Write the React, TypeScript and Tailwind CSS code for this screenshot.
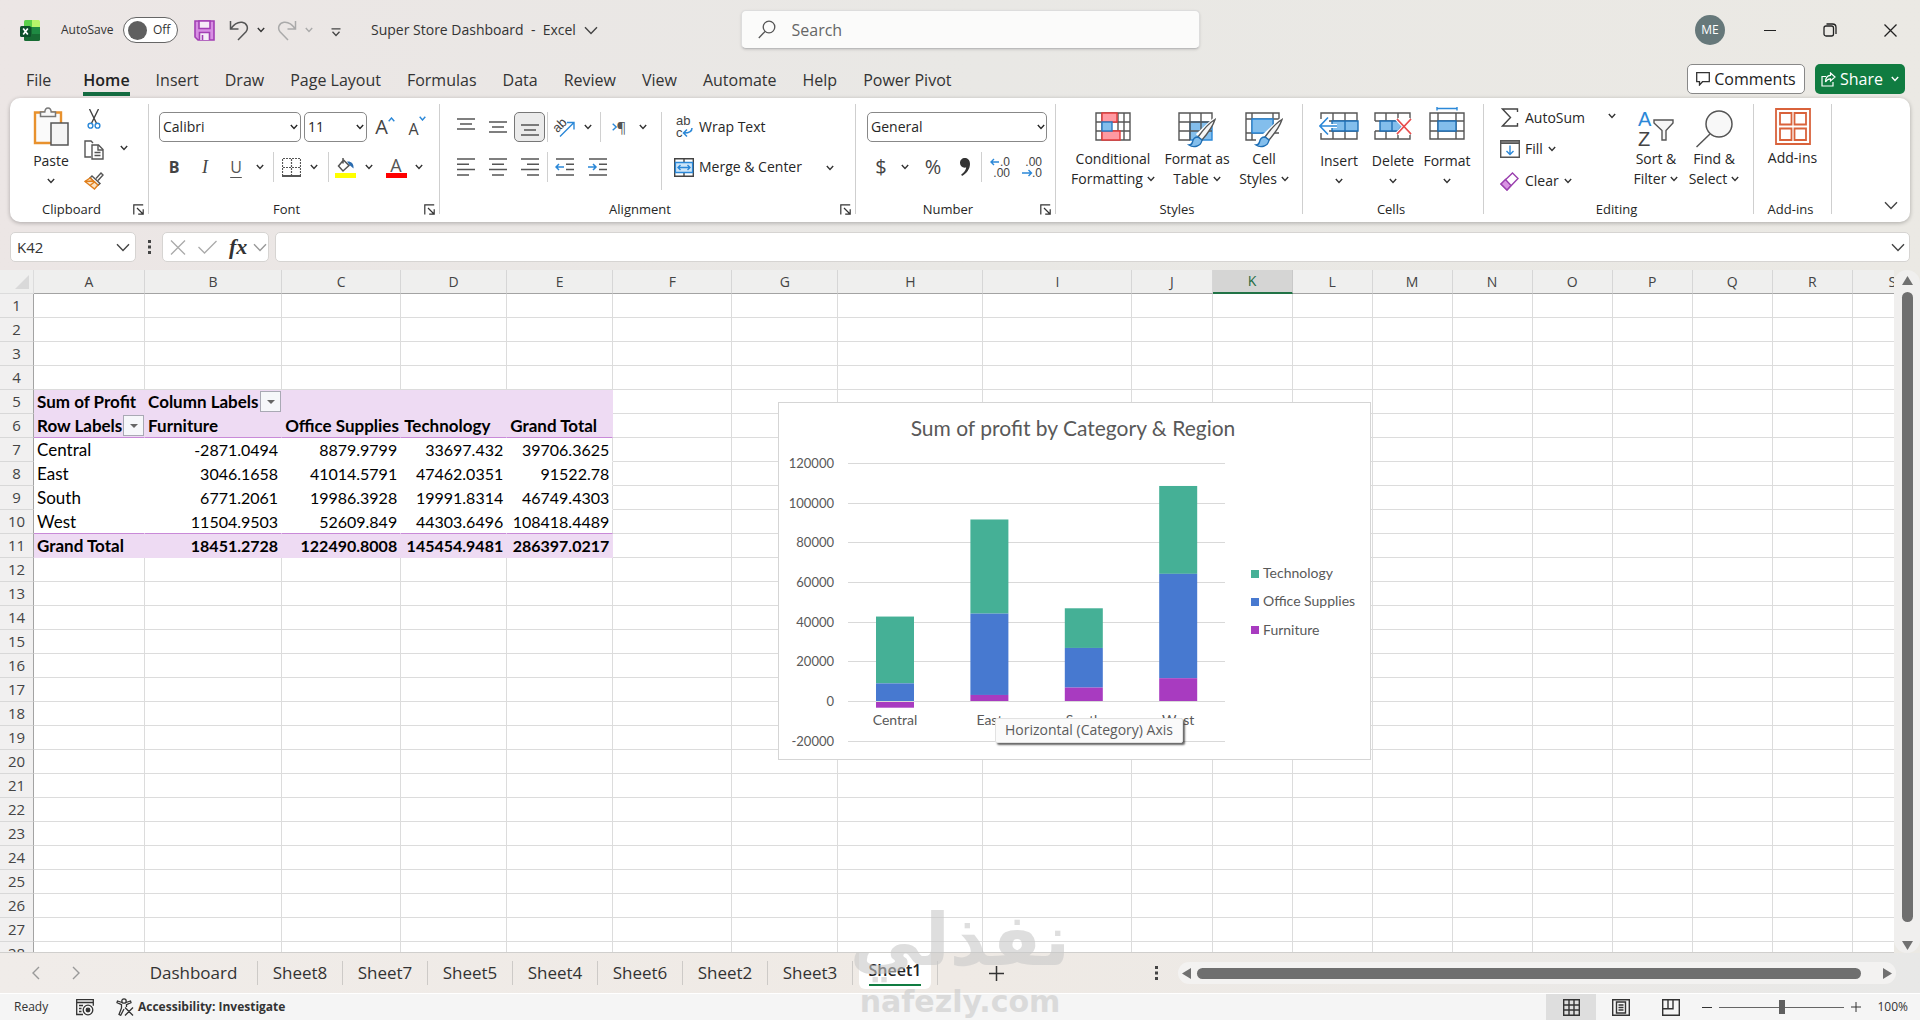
import React from "react";

type IconProps = { className?: string };

const COLUMNS = [
  { id: "A", width: 111 },
  { id: "B", width: 137 },
  { id: "C", width: 119 },
  { id: "D", width: 106 },
  { id: "E", width: 106 },
  { id: "F", width: 119 },
  { id: "G", width: 106 },
  { id: "H", width: 145 },
  { id: "I", width: 149 },
  { id: "J", width: 80 },
  { id: "K", width: 80 },
  { id: "L", width: 80 },
  { id: "M", width: 80 },
  { id: "N", width: 80 },
  { id: "O", width: 80 },
  { id: "P", width: 80 },
  { id: "Q", width: 80 },
  { id: "R", width: 80 },
  { id: "S", width: 80 },
];

const ROWS = Array.from({ length: 28 }, (_, i) => i + 1);

// Pivot table contents, keyed by row number
const PIVOT: Record<number, string[]> = {
  5: ["Sum of Profit", "Column Labels", "", "", ""],
  6: ["Row Labels", "Furniture", "Office Supplies", "Technology", "Grand Total"],
  7: ["Central", "-2871.0494", "8879.9799", "33697.432", "39706.3625"],
  8: ["East", "3046.1658", "41014.5791", "47462.0351", "91522.78"],
  9: ["South", "6771.2061", "19986.3928", "19991.8314", "46749.4303"],
  10: ["West", "11504.9503", "52609.849", "44303.6496", "108418.4489"],
  11: ["Grand Total", "18451.2728", "122490.8008", "145454.9481", "286397.0217"],
};

const REGIONS = [
  { name: "Central", furniture: -2871, office: 8880, tech: 33697 },
  { name: "East", furniture: 3046, office: 41015, tech: 47462 },
  { name: "South", furniture: 6771, office: 19986, tech: 19992 },
  { name: "West", furniture: 11505, office: 52610, tech: 44304 },
];

const TABS = ["File", "Home", "Insert", "Draw", "Page Layout", "Formulas", "Data", "Review", "View", "Automate", "Help", "Power Pivot"];
const SHEETS = ["Sheet8", "Sheet7", "Sheet5", "Sheet4", "Sheet6", "Sheet2", "Sheet3"];

/* ---------- small shared pieces ---------- */

const Chevron: React.FC<IconProps> = ({ className = "text-[#333]" }) => (
  <svg width="8" height="6" viewBox="0 0 8 6" fill="none" stroke="currentColor" strokeWidth="1.4" className={"shrink-0 " + className}>
    <path d="M.8 1 4 4.4 7.2 1" />
  </svg>
);

const BigChevron: React.FC<IconProps> = ({ className = "text-[#444]" }) => (
  <svg width="14" height="9" viewBox="0 0 14 9" fill="none" stroke="currentColor" strokeWidth="1.4" className={"shrink-0 " + className}>
    <path d="M1 1.2 7 7.4 13 1.2" />
  </svg>
);

const Launcher: React.FC<{ label: string }> = ({ label }) => (
  <button aria-label={label}>
    <svg width="11" height="11" viewBox="0 0 11 11" fill="none" stroke="#333" strokeWidth="1.2">
      <path d="M.8 10.5V.8h9.4M4 4l6 6M10.2 5.2v5H5.2" />
    </svg>
  </button>
);

const ChevronButton: React.FC<{ label: string; className?: string }> = ({ label, className = "" }) => (
  <button aria-label={label} className={"flex h-6 items-center justify-center " + className}>
    <Chevron />
  </button>
);

const IconButton: React.FC<{ label: string; className?: string; children: React.ReactNode }> = ({ label, className = "w-8", children }) => (
  <button aria-label={label} className={"flex h-[30px] shrink-0 items-center justify-center " + className}>
    {children}
  </button>
);

const Divider: React.FC<IconProps> = ({ className = "" }) => <span className={"h-[30px] w-px shrink-0 bg-[#d0d0d0] " + className} />;

const Group: React.FC<{ name: string; className: string; launcher?: boolean; children: React.ReactNode }> = ({ name, className, launcher, children }) => (
  <section aria-label={name} className={"mt-[6px] flex h-[110px] shrink-0 flex-col border-r border-[#cfcfcf] " + className}>
    <div className="flex flex-1 items-start">{children}</div>
    <div className="flex h-[10px] items-center pr-1">
      <span className="flex-1 text-center text-[13px] leading-4">{name}</span>
      {launcher && <Launcher label={name + " settings"} />}
    </div>
  </section>
);

/* ---------- icons ---------- */

const ExcelLogo = () => (
  <svg width="20" height="21" viewBox="0 0 20 21">
    <path d="M4 1.5Q4 0 5.500 0H12v7H4z" fill="#5bd04a" />
    <path d="M12 0h6.500Q20 0 20 1.500V7h-8z" fill="#b6f56a" />
    <path d="M4 7h16v12.500q0 1.500-1.500 1.500h-13Q4 21 4 19.500z" fill="#176b33" />
    <path d="M12 7h8v7h-8z" fill="#1e8a42" />
    <rect y="6" width="11" height="11" rx="1.500" fill="#0d4f2a" />
    <path d="m3.200 8.500 4.600 6M7.800 8.500l-4.600 6" stroke="#fff" strokeWidth="1.700" />
  </svg>
);

const SaveIcon = () => (
  <svg width="21" height="21" viewBox="0 0 21 21" fill="none" stroke="#a23fb4" strokeWidth="1.600">
    <path d="M1 1h19v19H4l-3-3z" fill="#d78fe3" />
    <path d="M5 1h11v7.500H5z" fill="#f6ecf8" />
    <path d="M5.500 20v-7.500h10V20" fill="#f6ecf8" />
    <path d="M8.500 15v5" />
  </svg>
);

const UndoIcon: React.FC<IconProps> = ({ className = "" }) => (
  <svg width="20" height="21" viewBox="0 0 20 21" fill="none" stroke="currentColor" strokeWidth="1.500" className={className}>
    <path d="M1.500 1v8h8M2 8.500C5 4 9 1.800 13 2.200c5 .6 6.800 6 4 9.600L9 20" />
  </svg>
);

const PasteIcon = () => (
  <svg width="36" height="39" viewBox="0 0 36 39" fill="none" strokeWidth="1.500">
    <path d="M2 5.500h26V36H2z" fill="#fafafa" stroke="#e8912d" strokeWidth="2.400" />
    <path d="M7.500 9.500V5h4.300C12 2.500 13 1 15 1s3 1.500 3.200 4h4.300v4.500z" fill="#f8f8f8" stroke="#777" />
    <path d="M18 16h17v22H18z" fill="#f5f5f5" stroke="#555" />
  </svg>
);

const CutIcon = () => (
  <svg width="14" height="20" viewBox="0 0 14 20" fill="none" strokeWidth="1.400">
    <path d="M2.500 0 9.600 14.500M11.500 0 4.400 14.500" stroke="#444" />
    <circle cx="3.500" cy="16.700" r="2.400" stroke="#2b88d8" />
    <circle cx="10.500" cy="16.700" r="2.400" stroke="#2b88d8" />
  </svg>
);

const CopyIcon = () => (
  <svg width="20" height="20" viewBox="0 0 20 20" fill="none" stroke="#555" strokeWidth="1.400">
    <path d="M7 17H1V1h6l2 2" />
    <path d="M8 5h6.500L19 9.500V19H8z" fill="#fff" />
    <path d="M14 5v5h5M10.500 12.500h6M10.500 15.500h6" />
  </svg>
);

const BrushIcon = () => (
  <svg width="20" height="18" viewBox="0 0 20 18" fill="none" strokeWidth="1.400">
    <path d="m12 6.500 5-5.500 2 2-5 5.500" fill="#fff" stroke="#555" />
    <path d="m8 4 8 7.500-2 1.800L6 6z" fill="#fff" stroke="#555" />
    <path d="M6 6 1 9.500 10.500 17l3.500-4z" fill="#fbe3c4" stroke="#e07f1c" />
    <path d="m1 9.500 9-.5M6 13.500l5-4" stroke="#e07f1c" />
  </svg>
);

const FontSizeIcon: React.FC<{ grow?: boolean }> = ({ grow }) => (
  <span className="flex items-start text-[#444]">
    <span className={grow ? "text-xl leading-5" : "pt-[3px] text-base leading-5"}>A</span>
    <svg width="7" height="5" viewBox="0 0 7 5" fill="none" stroke="#2b88d8" strokeWidth="1.400">
      <path d={grow ? "M.7 4.300 3.500 1l2.800 3.300" : "M.7.7 3.500 4 6.300.7"} />
    </svg>
  </span>
);

const BordersIcon = () => (
  <svg width="19" height="19" viewBox="0 0 19 19" fill="none" stroke="#555">
    <path d="M.5 1v16M18.500 1v16M9.500 1v16M1 .5h17M1 9.500h17" strokeDasharray="2 1" strokeWidth="1.200" />
    <path d="M0 18h19" strokeWidth="2" />
  </svg>
);

const FillColorIcon = () => (
  <svg width="21" height="21" viewBox="0 0 21 21" fill="none">
    <path d="M8 1v5.500M8.500 3 14 8.500l-6 5.500-4.500-5z" fill="#fff" stroke="#555" strokeWidth="1.500" />
    <path d="M12 4.500c4-.5 7 2 6.500 7L14.500 8z" fill="#2b6cb0" />
    <path d="M0 16h21v5H0z" fill="#ffff00" />
  </svg>
);

const FontColorIcon = () => (
  <span className="flex w-[21px] flex-col items-center">
    <span className="text-lg leading-4 text-[#555]">A</span>
    <span className="h-[5px] w-full bg-[#ff0000]" />
  </span>
);

// Stacked lines, used for all the alignment buttons
const LinesIcon: React.FC<{ d: string }> = ({ d }) => (
  <svg width="20" height="18" viewBox="0 0 20 18" stroke="#555" strokeWidth="1.500">
    <path d={d} />
  </svg>
);

const IndentIcon: React.FC<{ out?: boolean }> = ({ out }) => (
  <svg width="20" height="18" viewBox="0 0 20 18" fill="none" stroke="#555" strokeWidth="1.500">
    <path d="M1 1h18M11 6.300h8M11 11.600h8M1 17h18" />
    <path d={out ? "M9 9H1M4 6 1 9l3 3" : "M0 9h8M5 6l3 3-3 3"} stroke="#2b88d8" />
  </svg>
);

const OrientationIcon = () => (
  <svg width="21" height="20" viewBox="0 0 21 20" fill="none" className="overflow-visible">
    <text x="0" y="12" fontSize="13" fill="#444" transform="rotate(-45 7 10)" fontFamily="Liberation Sans, sans-serif">ab</text>
    <path d="M6 19.500 19.500 6M13 5.500h7v7" stroke="#2b88d8" strokeWidth="1.400" />
  </svg>
);

const DirectionIcon = () => (
  <span className="flex items-center text-[15px] leading-5 text-[#555]">
    <svg width="5" height="8" viewBox="0 0 5 8" fill="none" stroke="#2b88d8" strokeWidth="1.400">
      <path d="m.7.7 3.500 3.300L.7 7.300" />
    </svg>
    ¶
  </span>
);

const WrapIcon = () => (
  <svg width="17" height="22" viewBox="0 0 17 22" fill="none" className="overflow-visible">
    <g fontSize="13" fill="#444" fontFamily="Liberation Sans, sans-serif">
      <text x="0" y="9">ab</text>
      <text x="0" y="21">c</text>
    </g>
    <path d="M16 12c0 4-3 5-8 5M11 13.500 7.500 17l3.500 3.500" stroke="#2b88d8" strokeWidth="1.500" />
  </svg>
);

const MergeIcon = () => (
  <svg width="20" height="19" viewBox="0 0 20 19" fill="none" stroke="#444" strokeWidth="1.400">
    <path d="M.7.7h18.600v17.600H.7zM10 .7v3.500M10 14.800v3.500" />
    <path d="M1.400 4.500h17.200v10H1.400z" fill="#cfe6f8" stroke="#2b88d8" />
    <path d="M4 9.500h12M6.500 7 4 9.500 6.500 12M13.500 7 16 9.500 13.500 12" stroke="#2b88d8" />
  </svg>
);

const DecimalIcon: React.FC<{ more?: boolean }> = ({ more }) => (
  <svg width="20" height="22" viewBox="0 0 20 22" fill="none" className="overflow-visible">
    <g fontSize="12" fill="#444" fontFamily="Liberation Sans, sans-serif">
      <text x="20" y="9.500" textAnchor="end">{more ? ".0" : ".00"}</text>
      <text x="20" y="21" textAnchor="end">{more ? ".00" : ".0"}</text>
    </g>
    <path d={more ? "M9 6H1M4 3 1 6l3 3" : "M0 17h9M6.500 14l3 3-3 3"} stroke="#2b88d8" strokeWidth="1.400" />
  </svg>
);

const ConditionalIcon = () => (
  <svg width="36" height="29" viewBox="0 0 36 29" fill="none" stroke="#555" strokeWidth="1.400">
    <path d="M1 1h34v27H1zM1 10h34M1 19h34M7 1v27M29 1v27M23 1v27" />
    <path d="M7 1h15v9H7zM7 19h18v9H7z" fill="#ff9aa2" stroke="#e33b3b" />
    <path d="M7 10h10v9H7z" fill="#83beec" stroke="#2b7cc4" />
  </svg>
);

const TableBrush = () => (
  <g>
    <path d="M36 8 24 24l-3-2z" fill="#fff" stroke="#fff" strokeWidth="4" />
    <path d="M37 7.500C31 11 25 18 20 25l4 3C30 21 35 14 37 7.500z" fill="#f6f6f6" stroke="#555" />
    <path d="M20 25c-4 0-5 2-5.500 5-.5 2-2 3-3.500 3 4 3 12 2 13-5z" fill="#83beec" stroke="#1f6fb5" />
  </g>
);

const FormatTableIcon = () => (
  <svg width="38" height="36" viewBox="0 0 38 36" fill="none" stroke="#555" strokeWidth="1.400">
    <path d="M12 10h22v18H12z" fill="#83beec" stroke="#2b88d8" />
    <path d="M34 10V1H1v27h11M1 10h33M1 19h33M12 1v27M23 1v27" />
    <TableBrush />
  </svg>
);

const CellStylesIcon = () => (
  <svg width="38" height="36" viewBox="0 0 38 36" fill="none" stroke="#555" strokeWidth="1.400">
    <path d="M34 7V1H1v27h10M1 7h33M1 21h33M7 1v27M28 1v20" />
    <path d="M7 7h21v14H7z" fill="#83beec" stroke="#2b88d8" />
    <TableBrush />
  </svg>
);

const InsertIcon = () => (
  <svg width="40" height="38" viewBox="0 0 40 38" fill="none" stroke="#555" strokeWidth="1.400">
    <path d="M2 12V6h36v26H2v-6M14 6v26M26 6v26M10 14h28M10 24h28" />
    <path d="M13 14h26v10H13zM26 14v10" fill="#83beec" stroke="#1f6fb5" />
    <path d="M18 19H1M9 10.500.9 19 9 27.500" stroke="#fff" strokeWidth="4" />
    <path d="M18 19H1M9 10.500.9 19 9 27.500" stroke="#2b88d8" strokeWidth="1.600" />
  </svg>
);

const DeleteIcon = () => (
  <svg width="38" height="38" viewBox="0 0 38 38" fill="none" stroke="#555" strokeWidth="1.400">
    <path d="M1 14V6h35v6M36 26v6H1v-8M12 6v8M24 6v8M12 24v8M24 24v8M1 14h22M1 24h22" />
    <path d="M6 14h18l4 5-4 5H6zM18 14v10" fill="#83beec" stroke="#1f6fb5" />
    <path d="m23 12 14 15M37 12 23 27" stroke="#fff" strokeWidth="4" />
    <path d="m23 12 14 15M37 12 23 27" stroke="#e84d4d" strokeWidth="1.800" />
  </svg>
);

const FormatIcon = () => (
  <svg width="36" height="38" viewBox="0 0 36 38" fill="none" stroke="#555" strokeWidth="1.400">
    <path d="M1 6h34v26H1zM1 14h34M1 24h34M9 6v26M27 6v26" />
    <path d="M9 14h18v10H9z" fill="#83beec" stroke="#1f6fb5" />
    <path d="M8 1.500h20M8 0v3.500M28 0v3.500" stroke="#2b88d8" />
  </svg>
);

const SigmaIcon = () => (
  <svg width="18" height="19" viewBox="0 0 18 19" fill="none" stroke="#444" strokeWidth="1.400">
    <path d="M16.500 4V1H1.500l8 8.500-8 8.500h15v-3" />
  </svg>
);

const FillIcon = () => (
  <svg width="20" height="18" viewBox="0 0 20 18" fill="none" stroke="#555" strokeWidth="1.400">
    <path d="M.7.7h18.600v16.600H.7z" />
    <path d="M.7.7h18.600v2.500H.7z" fill="#999" />
    <path d="M10 5.500v9M6.500 11l3.500 3.500 3.500-3.500" stroke="#2b88d8" />
  </svg>
);

const EraserIcon = () => (
  <svg width="19" height="19" viewBox="0 0 19 19" fill="none" stroke="#9a3fae" strokeWidth="1.400">
    <path d="M12.500 1 18 6.500 7 18 1 12z" fill="#fff" />
    <path d="M5.500 7.500 11 13.500 7 18 1 12z" fill="#d993e3" />
  </svg>
);

const SortIcon = () => (
  <svg width="36" height="36" viewBox="0 0 36 36" fill="none" className="overflow-visible">
    <g fontSize="20" fontFamily="Liberation Sans, sans-serif">
      <text x="0" y="14" fill="#2b88d8">A</text>
      <text x="0" y="34" fill="#444">Z</text>
    </g>
    <path d="M16 8h19v3l-7 7.500V28h-4v-9.500L16 11z" fill="#f6f6f6" stroke="#555" strokeWidth="1.400" />
  </svg>
);

const FindIcon = () => (
  <svg width="38" height="36" viewBox="0 0 38 36" fill="none" stroke="#555" strokeWidth="1.500" className="overflow-visible">
    <circle cx="24" cy="12" r="13" fill="#f8f8f8" />
    <path d="M15 22 1.500 35" />
  </svg>
);

const AddInsIcon = () => (
  <svg width="36" height="37" viewBox="0 0 36 37" fill="none" stroke="#d9623b" strokeWidth="1.800">
    <path d="M1 1h34v35H1zM5 5h11.500v11.500H5zM19.500 5H31v11.500H19.500zM5 20.500h11.500V32H5zM19.500 20.500H31V32H19.500z" />
  </svg>
);

const SearchIcon = () => (
  <svg width="18" height="19" viewBox="0 0 18 19" fill="none" stroke="#555" strokeWidth="1.300">
    <circle cx="11" cy="7" r="5.800" />
    <path d="M7 11.500.8 18" />
  </svg>
);

/* ---------- top of the window ---------- */

const TitleBar: React.FC = () => (
  <header className="flex h-15 shrink-0 items-center text-[#333]">
    <div className="flex flex-1 items-center pl-5">
      <ExcelLogo />
      <label htmlFor="autosave" className="ml-[21px] w-[58px] text-xs">AutoSave</label>
      <span className="relative ml-1 flex h-[26px] w-[55px] items-center rounded-full border border-[#666] bg-white pl-1">
        <input id="autosave" type="checkbox" className="absolute inset-0 opacity-0" />
        <span className="size-[19px] rounded-full bg-[#5f5f5f]" />
        <span className="ml-[6px] text-xs">Off</span>
      </span>
      <button aria-label="Save" className="ml-4"><SaveIcon /></button>
      <button aria-label="Undo" className="ml-[14px]"><UndoIcon className="text-[#555]" /></button>
      <ChevronButton label="Undo history" className="ml-[6px] w-3" />
      <button aria-label="Redo" className="ml-[10px]"><UndoIcon className="-scale-x-100 text-[#aaa]" /></button>
      <button aria-label="Redo history" className="ml-[6px] flex w-3 justify-center"><Chevron className="text-[#aaa]" /></button>
      <button aria-label="Customize toolbar" className="ml-4 mt-1">
        <svg width="10" height="9" viewBox="0 0 10 9" fill="none" stroke="#444" strokeWidth="1.300"><path d="M.5.8h9M1.500 3.800 5 7.500l3.500-3.700" /></svg>
      </button>
      <h1 className="ml-[30px] text-sm whitespace-pre">Super Store Dashboard{"  -  "}Excel</h1>
      <button aria-label="File menu" className="ml-2"><BigChevron /></button>
    </div>
    <label className="mb-px flex h-[39px] w-[459px] items-center gap-4 rounded-[5px] border border-[#ddd] border-b-[#bbb] bg-[#fbfbfa] px-4 shadow-sm">
      <SearchIcon />
      <input type="search" aria-label="Search" placeholder="Search" className="flex-1 bg-transparent text-base outline-none placeholder:text-[#666]" />
    </label>
    <div className="flex flex-1 items-center justify-end">
      <button className="mr-[15px] size-[30px] rounded-full bg-[#66787a] text-xs text-white">ME</button>
      <button aria-label="Minimize" className="flex w-[60px] justify-center"><span className="h-px w-3 bg-[#222]" /></button>
      <button aria-label="Restore" className="flex w-[60px] justify-center">
        <svg width="14" height="14" viewBox="0 0 14 14" fill="none" stroke="#222" strokeWidth="1.300"><rect x="1" y="3" width="9.500" height="10" rx="2" /><path d="M3.500 1h6q3.500 0 3.500 3.500V11" /></svg>
      </button>
      <button aria-label="Close" className="flex w-[60px] justify-center">
        <svg width="13" height="13" viewBox="0 0 13 13" stroke="#222" strokeWidth="1.300"><path d="m.5.5 12 12M12.500.5l-12 12" /></svg>
      </button>
    </div>
  </header>
);

const RibbonTabs: React.FC = () => (
  <div className="flex h-[38px] shrink-0 items-center justify-between pr-[15px] pl-[26px]">
    <nav className="flex gap-[26px]">
      {TABS.map(tab => (
        <button
          key={tab}
          className={
            tab === "Home"
              ? "ml-[6px] h-[33px] border-b-4 border-[#146c41] pt-[5px] text-base leading-6 font-semibold text-[#222]"
              : "h-[33px] border-b-4 border-transparent pt-[5px] text-base leading-6 text-[#333]"
          }
        >
          {tab}
        </button>
      ))}
    </nav>
    <div className="flex gap-[10px] text-base">
      <button className="flex h-[30px] w-[118px] items-center justify-center gap-1 rounded-[5px] border border-[#888] bg-white whitespace-nowrap text-[#222]">
        <svg width="14" height="14" viewBox="0 0 14 14" fill="none" stroke="#333" strokeWidth="1.300"><path d="M.7.7h12.600v9H6.500L3.500 13V9.700H.7z" /></svg>
        Comments
      </button>
      <button className="flex h-[30px] w-[90px] items-center justify-center gap-1 rounded-[5px] bg-[#107c41] text-white">
        <svg width="15" height="15" viewBox="0 0 15 15" fill="none" stroke="#fff" strokeWidth="1.200"><path d="M5 4.500H1V14h11v-4M9.500 1l4.500 4-4.500 4V6.800C7 6.800 5.500 8 4.500 10 4.500 6.500 6 3.500 9.500 3.300z" /></svg>
        Share
        <Chevron className="ml-1 text-white" />
      </button>
    </div>
  </div>
);

// Tall ribbon button: picture, then a caption of one or two lines
const TallButton: React.FC<{ lines: string[]; className: string; arrow?: "inline" | "below"; children: React.ReactNode }> = ({ lines, className, arrow, children }) => (
  <button className={"flex shrink-0 flex-col items-center text-sm leading-5 whitespace-nowrap " + className}>
    <span className={arrow === "below" ? "flex h-11 items-start" : "flex h-[37px] items-start"}>{children}</span>
    {lines.map((line, i) => (
      <span key={line} className="flex items-center gap-1">
        {line}
        {arrow === "inline" && i === lines.length - 1 && <Chevron />}
      </span>
    ))}
    {arrow === "below" && <span className="flex h-5 items-center"><Chevron /></span>}
  </button>
);

const ClipboardGroup = () => (
  <Group name="Clipboard" className="w-[139px]" launcher>
    <TallButton lines={["Paste"]} arrow="below" className="ml-[15px] w-[52px] pt-[3px]"><PasteIcon /></TallButton>
    <div className="flex w-[33px] flex-col items-center">
      <button aria-label="Cut" className="flex h-[30px] items-center"><CutIcon /></button>
      <button aria-label="Copy" className="flex h-[32px] items-center"><CopyIcon /></button>
      <button aria-label="Format painter" className="flex h-[30px] items-center"><BrushIcon /></button>
    </div>
    <ChevronButton label="Copy options" className="mt-8 w-7" />
  </Group>
);

const FontGroup = () => (
  <Group name="Font" className="w-[291px]" launcher>
    <div className="flex flex-col gap-[10px] pt-2 pl-[10px]">
      <div className="flex items-center">
        <label className="relative mr-[3px] flex items-center">
          <select aria-label="Font name" className="h-[30px] w-[142px] appearance-none rounded-[5px] border border-[#888] bg-white pl-[3px] text-sm">
            <option>Calibri</option>
          </select>
          <Chevron className="pointer-events-none absolute right-[3px]" />
        </label>
        <label className="relative flex items-center">
          <select aria-label="Font size" className="h-[30px] w-[63px] appearance-none rounded-[5px] border border-[#888] bg-white pl-[3px] text-sm">
            <option>11</option>
          </select>
          <Chevron className="pointer-events-none absolute right-[3px]" />
        </label>
        <IconButton label="Increase font size" className="ml-[2px] w-8"><FontSizeIcon grow /></IconButton>
        <IconButton label="Decrease font size"><FontSizeIcon /></IconButton>
      </div>
      <div className="flex items-center">
        <IconButton label="Bold" className="w-[30px]"><b className="text-base text-[#444]">B</b></IconButton>
        <IconButton label="Italic"><i className="font-['Liberation_Serif',serif] text-lg text-[#444]">I</i></IconButton>
        <IconButton label="Underline" className="w-[30px]"><u className="text-base text-[#555] underline-offset-4">U</u></IconButton>
        <ChevronButton label="Underline options" className="w-[18px]" />
        <Divider className="mx-1" />
        <IconButton label="Borders" className="w-[26px]"><BordersIcon /></IconButton>
        <ChevronButton label="Border options" className="w-5" />
        <Divider className="mx-1" />
        <IconButton label="Fill color" className="w-6"><FillColorIcon /></IconButton>
        <ChevronButton label="Fill color options" className="w-6" />
        <IconButton label="Font color" className="w-[30px]"><FontColorIcon /></IconButton>
        <ChevronButton label="Font color options" className="w-4" />
      </div>
    </div>
  </Group>
);

const AlignmentGroup = () => (
  <Group name="Alignment" className="w-[416px]" launcher>
    <div className="flex flex-col gap-[10px] pt-2 pl-[10px]">
      <div className="flex items-center">
        <IconButton label="Top align"><LinesIcon d="M1 1h18M4 6h12M1 11h18" /></IconButton>
        <IconButton label="Middle align"><LinesIcon d="M1 4h18M4 9h12M1 14h18" /></IconButton>
        <IconButton label="Bottom align" className="w-[31px] rounded-[5px] border border-[#777] bg-[#ebebeb]"><LinesIcon d="M1 7h18M4 12h12M1 17h18" /></IconButton>
        <Divider className="ml-[2px]" />
        <IconButton label="Orientation" className="w-8"><OrientationIcon /></IconButton>
        <ChevronButton label="Orientation options" className="w-4" />
        <Divider className="mx-1" />
        <IconButton label="Text direction" className="w-7"><DirectionIcon /></IconButton>
        <ChevronButton label="Text direction options" className="w-5" />
      </div>
      <div className="flex items-center">
        <IconButton label="Align left"><LinesIcon d="M1 1h18M1 6.300h12M1 11.600h18M1 17h12" /></IconButton>
        <IconButton label="Center"><LinesIcon d="M1 1h18M4 6.300h12M1 11.600h18M4 17h12" /></IconButton>
        <IconButton label="Align right" className="w-[31px]"><LinesIcon d="M1 1h18M7 6.300h12M1 11.600h18M7 17h12" /></IconButton>
        <Divider className="ml-[2px]" />
        <IconButton label="Decrease indent" className="w-[34px]"><IndentIcon out /></IconButton>
        <IconButton label="Increase indent"><IndentIcon /></IconButton>
      </div>
    </div>
    <span className="mt-2 ml-2 h-[78px] w-px bg-[#d0d0d0]" />
    <div className="ml-3 flex flex-col gap-[10px] pt-2 text-sm whitespace-nowrap">
      <button className="flex h-[30px] items-center gap-[5px]"><span className="flex w-5 justify-center"><WrapIcon /></span>Wrap Text</button>
      <div className="flex">
        <button className="flex h-[30px] items-center gap-[5px]"><MergeIcon />Merge &amp; Center</button>
        <ChevronButton label="Merge options" className="ml-5 mt-1 w-4" />
      </div>
    </div>
  </Group>
);

const NumberGroup = () => (
  <Group name="Number" className="w-[200px]" launcher>
    <div className="flex flex-col gap-[10px] pt-2 pl-[11px]">
      <label className="relative flex items-center">
        <select aria-label="Number format" className="h-[30px] w-[180px] appearance-none rounded-[5px] border border-[#888] bg-white pl-[3px] text-sm">
          <option>General</option>
        </select>
        <Chevron className="pointer-events-none absolute right-[3px]" />
      </label>
      <div className="flex items-center text-[#444]">
        <IconButton label="Currency" className="w-7"><span className="text-xl">$</span></IconButton>
        <ChevronButton label="Currency options" className="w-5" />
        <IconButton label="Percent" className="w-9"><span className="text-xl">%</span></IconButton>
        <IconButton label="Comma style" className="w-7">
          <svg width="10" height="18" viewBox="0 0 10 18" fill="#333"><path d="M5 0c3 0 5 2.500 5 6 0 5-3.500 9.500-8 12l-.8-1.500C4 14.500 6 12 6.200 9.500 2.500 10.300 0 8 0 5c0-3 2-5 5-5z" /></svg>
        </IconButton>
        <Divider className="mx-[2px]" />
        <IconButton label="Increase decimal"><DecimalIcon more /></IconButton>
        <IconButton label="Decrease decimal"><DecimalIcon /></IconButton>
      </div>
    </div>
  </Group>
);

const Ribbon: React.FC = () => (
  <div className="mx-[10px] flex h-[124px] shrink-0 overflow-hidden rounded-[10px] bg-white text-[#262626] shadow-[0_1px_4px_rgba(0,0,0,0.28)]">
    <ClipboardGroup />
    <FontGroup />
    <AlignmentGroup />
    <NumberGroup />
    <Group name="Styles" className="w-[247px]">
      <TallButton lines={["Conditional", "Formatting"]} arrow="inline" className="ml-3 w-[90px] pt-2"><ConditionalIcon /></TallButton>
      <TallButton lines={["Format as", "Table"]} arrow="inline" className="w-[78px] pt-2"><FormatTableIcon /></TallButton>
      <TallButton lines={["Cell", "Styles"]} arrow="inline" className="w-[56px] pt-2"><CellStylesIcon /></TallButton>
    </Group>
    <Group name="Cells" className="w-[181px]">
      <TallButton lines={["Insert"]} arrow="below" className="ml-[9px] w-[54px] pt-[3px]"><InsertIcon /></TallButton>
      <TallButton lines={["Delete"]} arrow="below" className="w-[54px] pt-[3px]"><DeleteIcon /></TallButton>
      <TallButton lines={["Format"]} arrow="below" className="w-[54px] pt-[3px]"><FormatIcon /></TallButton>
    </Group>
    <Group name="Editing" className="w-[270px]">
      <div className="ml-4 flex w-[120px] flex-col text-sm">
        <div className="flex">
          <button className="flex h-[27px] items-center gap-[5px]"><span className="flex w-5 justify-center"><SigmaIcon /></span>AutoSum</button>
          <ChevronButton label="AutoSum options" className="ml-auto w-4" />
        </div>
        <button className="flex h-9 items-center gap-[5px]"><FillIcon />Fill<Chevron /></button>
        <button className="flex h-[28px] items-center gap-[5px]"><span className="flex w-5"><EraserIcon /></span>Clear<Chevron /></button>
      </div>
      <TallButton lines={["Sort &", "Filter"]} arrow="inline" className="ml-[7px] w-[58px] pt-2"><SortIcon /></TallButton>
      <TallButton lines={["Find &", "Select"]} arrow="inline" className="w-[58px] pt-2"><FindIcon /></TallButton>
    </Group>
    <Group name="Add-ins" className="w-[78px]">
      <TallButton lines={["Add-ins"]} className="w-full gap-[3px] pt-1"><AddInsIcon /></TallButton>
    </Group>
    <div className="flex flex-1 items-end justify-end pr-3 pb-3">
      <button aria-label="Collapse ribbon"><BigChevron /></button>
    </div>
  </div>
);

const FormulaBar: React.FC = () => (
  <div className="mx-[10px] mt-[10px] mb-2 flex h-[30px] shrink-0 items-center">
    <div className="flex h-full w-[126px] items-center rounded-[5px] border border-[#d6d4d2] bg-white pr-[5px] pl-[6px]">
      <input aria-label="Name box" defaultValue="K42" className="w-0 flex-1 text-[15px] text-[#333] outline-none" />
      <button aria-label="Named ranges"><BigChevron /></button>
    </div>
    <svg width="26" height="16" viewBox="0 0 26 16" fill="#444"><path d="M12 1h3v3h-3zM12 6.500h3v3h-3zM12 12h3v3h-3z" /></svg>
    <div className="flex h-full w-[107px] items-center rounded-[5px] border border-[#d6d4d2] bg-white pr-px pl-[7px]">
      <button aria-label="Cancel"><svg width="16" height="15" viewBox="0 0 16 15" stroke="#aaa" strokeWidth="1.300"><path d="m1 .5 14 14M15 .5l-14 14" /></svg></button>
      <button aria-label="Enter" className="ml-3"><svg width="19" height="14" viewBox="0 0 19 14" fill="none" stroke="#aaa" strokeWidth="1.300"><path d="m.5 7 6 6L18.500 1" /></svg></button>
      <button aria-label="Insert function" className="ml-3 font-['Liberation_Serif',serif] text-[22px] leading-6 font-bold text-[#333] italic">fx</button>
      <button aria-label="Function list" className="ml-auto"><BigChevron className="text-[#999]" /></button>
    </div>
    <div className="ml-[6px] flex h-full flex-1 items-center rounded-[5px] border border-[#d6d4d2] bg-white pr-1">
      <input aria-label="Formula" className="flex-1 px-2 text-sm outline-none" />
      <button aria-label="Expand formula bar"><BigChevron /></button>
    </div>
  </div>
);

/* ---------- worksheet ---------- */

const FilterButton: React.FC<{ label: string }> = ({ label }) => (
  <button aria-label={label} className="flex size-[21px] shrink-0 items-center justify-center border border-[#a9a9b4] bg-[#f6f7fa]">
    <svg width="8" height="4" viewBox="0 0 8 4" fill="#666"><path d="M0 0h8L4 4z" /></svg>
  </button>
);

const cellClass = (row: number, col: number) => {
  const inPivot = row >= 5 && row <= 11 && col < 5;
  if (!inPivot) return "border-r border-b border-[#dcdcdc] p-0";
  const isNumber = col > 0 && row >= 7;
  const base =
    "border-r border-b p-0 font-['Lato',sans-serif] text-black " +
    (isNumber ? "text-right text-base leading-[23px] " : "text-left text-[17px] leading-[23px] ");
  if (row === 6) return base + "border-r-[#eedbf3] border-b-[#c98ad8] bg-[#eedbf3] font-bold";
  if (row === 5 || row === 11) return base + "border-[#eedbf3] bg-[#eedbf3] font-bold";
  return base + (row === 10 ? "border-b-[#c98ad8] " : "border-b-white ") + (col === 4 ? "border-r-[#dcdcdc]" : "border-r-white");
};

const Sheet: React.FC = () => (
  <table className="w-[1933px] table-fixed border-separate border-spacing-0">
    <colgroup>
      <col style={{ width: 34 }} />
      {COLUMNS.map(c => <col key={c.id} style={{ width: c.width }} />)}
    </colgroup>
    <thead>
      <tr className="h-6 text-sm leading-[23px] text-[#444]">
        <th className="border-r border-b border-[#dcdcdc] bg-[#efefee] p-0" aria-label="Select all">
          <svg width="14" height="14" viewBox="0 0 14 14" className="ml-auto mr-1" fill="#d9d9d9"><path d="M14 0v14H0z" /></svg>
        </th>
        {COLUMNS.map(c => (
          <th
            key={c.id}
            className={
              c.id === "K"
                ? "border-r border-b-2 border-[#c8c8c8] border-b-[#217346] bg-[#d5d5d4] p-0 leading-[22px] font-normal text-[#1e6b42]"
                : "border-r border-b border-[#d6d6d6] border-b-[#a3a3a3] bg-[#efefee] p-0 font-normal"
            }
          >
            {c.id}
          </th>
        ))}
      </tr>
    </thead>
    <tbody>
      {ROWS.map(row => (
        <tr key={row} className="h-6">
          <th className="border-r border-b border-[#d8d8d8] border-r-[#a3a3a3] bg-[#f1f0f0] p-0 text-[15px] leading-[23px] font-normal text-[#444]">{row}</th>
          {COLUMNS.map((c, col) => {
            const text = PIVOT[row]?.[col];
            const hasFilter = (row === 5 && col === 1) || (row === 6 && col === 0);
            return (
              <td key={c.id} className={cellClass(row, col)}>
                {hasFilter ? (
                  <div className="flex h-[23px] items-center justify-between pl-[3px] whitespace-nowrap">
                    {text}
                    <FilterButton label={"Filter " + text} />
                  </div>
                ) : text ? (
                  <div className="h-[23px] px-[3px] whitespace-nowrap">{text}</div>
                ) : null}
              </td>
            );
          })}
        </tr>
      ))}
    </tbody>
  </table>
);

const ZERO_Y = 299;
const toPx = (value: number) => (value * 238) / 120000;

const ProfitChart: React.FC = () => (
  <svg width="593" height="358" viewBox="0 0 593 358" fontFamily="Lato, sans-serif" fill="#595959" role="img" aria-label="Sum of profit by Category & Region">
    <rect x=".5" y=".5" width="592" height="357" fill="#fff" stroke="#d5d5d5" />
    <text x="295" y="34" fontSize="21" textAnchor="middle">Sum of profit by Category &amp; Region</text>
    {[120000, 100000, 80000, 60000, 40000, 20000, 0, -20000].map(v => {
      const y = Math.round(ZERO_Y - toPx(v)) + 0.5;
      return (
        <g key={v}>
          <path d={`M70 ${y}H447`} stroke="#d9d9d9" />
          <text x="56" y={y + 4} fontSize="13" textAnchor="end">{v}</text>
        </g>
      );
    })}
    {REGIONS.map((r, i) => {
      const x = 98 + i * 94.4;
      const base = Math.max(r.furniture, 0);
      return (
        <g key={r.name}>
          <rect x={x} y={ZERO_Y - toPx(base + r.office + r.tech)} width="38" height={toPx(r.tech)} fill="#45b096" />
          <rect x={x} y={ZERO_Y - toPx(base + r.office)} width="38" height={toPx(r.office)} fill="#4779d0" />
          <rect x={x} y={r.furniture > 0 ? ZERO_Y - toPx(r.furniture) : ZERO_Y + 1} width="38" height={Math.abs(toPx(r.furniture))} fill="#a83bc0" />
          <text x={x + 19} y="323" fontSize="14" textAnchor="middle">{r.name}</text>
        </g>
      );
    })}
    <rect x="473" y="168" width="8" height="8" fill="#45b096" />
    <text x="485" y="176" fontSize="14">Technology</text>
    <rect x="473" y="196" width="8" height="8" fill="#4779d0" />
    <text x="485" y="204" fontSize="14">Office Supplies</text>
    <rect x="473" y="224" width="8" height="8" fill="#a83bc0" />
    <text x="485" y="233" fontSize="14">Furniture</text>
  </svg>
);

const Worksheet: React.FC = () => (
  <main className="flex min-h-0 flex-1">
    <div className="relative min-w-0 flex-1 overflow-hidden border-b border-[#d0cfcd] bg-white">
      <Sheet />
      <div className="absolute top-[132px] left-[778px]">
        <ProfitChart />
        <div role="tooltip" className="absolute top-[316px] left-[217px] h-[25px] w-[188px] rounded-[2px] border border-[#e2e2e2] bg-[#fafafa] text-center text-sm leading-[22px] whitespace-nowrap text-[#5c5c5c] shadow-[2px_2px_2px_rgba(0,0,0,0.6)]">
          Horizontal (Category) Axis
        </div>
      </div>
    </div>
    <div className="flex w-[26px] shrink-0 flex-col items-center rounded-full bg-[#f0efee] pt-[2px] pb-[3px]">
      <button aria-label="Scroll up"><svg width="11" height="9" viewBox="0 0 11 9" fill="#707070" className="my-1"><path d="M5.500 0 11 9H0z" /></svg></button>
      <div className="my-[3px] w-[11px] flex-1 rounded-full bg-[#6f6f6f]" />
      <div className="h-4" />
      <button aria-label="Scroll down"><svg width="11" height="9" viewBox="0 0 11 9" fill="#707070"><path d="M5.500 9 0 0h11z" /></svg></button>
    </div>
  </main>
);

/* ---------- bottom of the window ---------- */

const SheetTabs: React.FC = () => (
  <div className="flex h-10 shrink-0 items-center bg-linear-to-r from-[#f0ece9] via-[#efeae5] to-[#e8e8e7] text-[17px] text-[#333]">
    <button aria-label="Previous sheet" className="ml-8"><svg width="8" height="14" viewBox="0 0 8 14" fill="none" stroke="#999" strokeWidth="1.400"><path d="M7 1 1 7l6 6" /></svg></button>
    <button aria-label="Next sheet" className="ml-8"><svg width="8" height="14" viewBox="0 0 8 14" fill="none" stroke="#999" strokeWidth="1.400"><path d="m1 1 6 6-6 6" /></svg></button>
    <button className="ml-[50px] h-6 w-[128px] border-r border-[#cdcac7] leading-6">Dashboard</button>
    {SHEETS.map(name => (
      <button key={name} className="h-6 w-[85px] border-r border-[#cdcac7] leading-6">{name}</button>
    ))}
    <button className="mx-[6px] flex h-9 w-[72px] items-center justify-center self-start rounded-b-md bg-white font-semibold text-[#222]">
      <span className="border-b-2 border-[#107c41] text-base leading-[27px]">Sheet1</span>
    </button>
    <span className="h-6 w-px bg-[#cdcac7]" />
    <button aria-label="New sheet" className="ml-[51px]"><svg width="15" height="15" viewBox="0 0 15 15" stroke="#333" strokeWidth="1.500"><path d="M7.500 0v15M0 7.500h15" /></svg></button>
    <svg width="4" height="14" viewBox="0 0 4 14" fill="#444" className="ml-[151px]"><path d="M0 0h3v3H0zM0 5.500h3v3H0zM0 11h3v3H0z" /></svg>
    <div className="mr-6 ml-[19px] flex h-[22px] flex-1 items-center rounded-full bg-[#f3f2f1] px-1">
      <button aria-label="Scroll left"><svg width="9" height="11" viewBox="0 0 9 11" fill="#707070"><path d="M0 5.500 9 0v11z" /></svg></button>
      <div className="mr-[22px] ml-[6px] h-[11px] flex-1 rounded-full bg-[#6f6f6f]" />
      <button aria-label="Scroll right"><svg width="9" height="11" viewBox="0 0 9 11" fill="#707070"><path d="M9 5.500 0 0v11z" /></svg></button>
    </div>
  </div>
);

const StatusBar: React.FC = () => (
  <footer className="flex h-[27px] shrink-0 items-center border-t border-white bg-[#f5f5f5] pl-[14px] text-xs text-[#333]">
    <span className="w-[62px]">Ready</span>
    <svg width="18" height="17" viewBox="0 0 18 17" fill="none" stroke="#333" strokeWidth="1.300">
      <path d="M7 15.500H.7V.7h16.600v6M.7 3.500h16.600M3 6.500h4M3 9.500h2.500M3 12.500h2.500" />
      <circle cx="12" cy="11" r="4.800" fill="#f5f5f5" />
      <circle cx="12" cy="11" r="1.800" fill="#333" />
    </svg>
    <button className="ml-[22px] flex items-center gap-1 font-bold">
      <svg width="18" height="18" viewBox="0 0 18 18" fill="none" stroke="#333" strokeWidth="1.300">
        <circle cx="8" cy="3" r="2.200" />
        <path d="M6 4.500 1.500 3 1 4.700l4.500 2V10L3 16.500l1.700.8L8 11M10 4.500 14.500 3l.5 1.700-4.500 2V9M9 9.500l8 8M17 9.500l-8 8" />
      </svg>
      Accessibility: Investigate
    </button>
    <div className="ml-auto flex h-full items-center">
      <button aria-label="Normal view" className="flex h-full w-[50px] items-center justify-center bg-[#dedede]">
        <svg width="17" height="17" viewBox="0 0 17 17" fill="none" stroke="#333" strokeWidth="1.400"><path d="M.7.7h15.600v15.600H.7zM6 .7v15.600M11 .7v15.600M.7 6h15.600M.7 11h15.600" /></svg>
      </button>
      <button aria-label="Page layout view" className="flex w-[50px] justify-center">
        <svg width="18" height="17" viewBox="0 0 18 17" fill="none" stroke="#333" strokeWidth="1.400"><path d="M.7.7h16.600v15.600H.7zM4.500 3h9v11h-9zM6.500 6h5M6.500 8.500h5M6.500 11h5" /></svg>
      </button>
      <button aria-label="Page break preview" className="flex w-[50px] justify-center">
        <svg width="18" height="17" viewBox="0 0 18 17" fill="none" stroke="#333" strokeWidth="1.400"><path d="M.7.7h16.600v15.600H.7zM6 .7v9M11 .7v9H.7" /></svg>
      </button>
      <button aria-label="Zoom out" className="ml-[6px] h-px w-[10px] bg-[#333]" />
      <input
        type="range"
        aria-label="Zoom"
        min={0}
        max={100}
        defaultValue={50}
        className="mx-[7px] h-4 w-[125px] appearance-none bg-transparent [&::-webkit-slider-runnable-track]:h-px [&::-webkit-slider-runnable-track]:bg-[#666] [&::-webkit-slider-thumb]:-mt-[7px] [&::-webkit-slider-thumb]:h-[14px] [&::-webkit-slider-thumb]:w-[6px] [&::-webkit-slider-thumb]:appearance-none [&::-webkit-slider-thumb]:bg-[#5f5f5f]"
      />
      <button aria-label="Zoom in"><svg width="10" height="10" viewBox="0 0 10 10" stroke="#333"><path d="M5 0v10M0 5h10" /></svg></button>
      <span className="w-[59px] pr-3 text-right">100%</span>
    </div>
  </footer>
);

const Watermark: React.FC = () => (
  <div className="pointer-events-none absolute inset-x-0 bottom-0 flex flex-col items-center font-bold text-[#c9c9c9] opacity-60">
    <span lang="ar" dir="rtl" className="font-['DejaVu_Sans',sans-serif] text-[72px] leading-[88px]">نفذلي</span>
    <span className="font-['DejaVu_Sans',sans-serif] text-[30px] leading-9">nafezly.com</span>
  </div>
);

export default function App() {
  return (
    <div className="relative flex h-screen flex-col overflow-hidden bg-linear-to-r from-[#ece6e5] via-[#e9e8e5] to-[#ebe9e4] font-['Open_Sans',sans-serif]">
      <TitleBar />
      <RibbonTabs />
      <Ribbon />
      <FormulaBar />
      <Worksheet />
      <SheetTabs />
      <StatusBar />
      <Watermark />
    </div>
  );
}
